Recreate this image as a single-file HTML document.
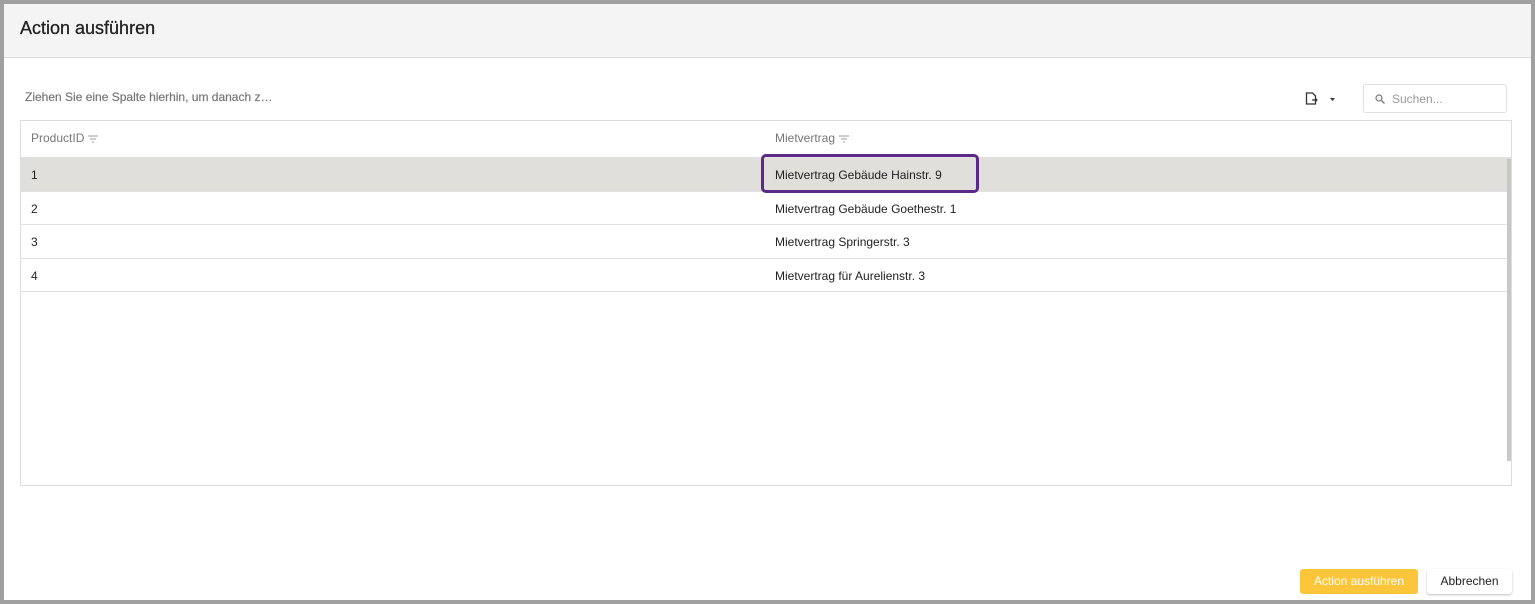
<!DOCTYPE html>
<html><head><meta charset="utf-8"><style>
*{box-sizing:border-box;margin:0;padding:0}
body{width:1535px;height:604px;background:#a0a0a0;font-family:"Liberation Sans",Roboto,sans-serif;position:relative;overflow:hidden}
.win{position:absolute;left:4px;top:4px;width:1527px;height:596px;background:#fff}
.hdr{position:absolute;left:0;top:0;width:100%;height:54px;background:#f4f4f4;border-bottom:1px solid #dcdcdc}
.hdr span{position:absolute;left:16px;top:14px;font-size:18px;color:#222;-webkit-text-stroke:0.3px #222}
.grp{position:absolute;left:21px;top:86px;font-size:12px;color:#777;-webkit-text-stroke:0.2px #777}
.search{position:absolute;left:1359px;top:80px;width:144px;height:29px;border:1px solid #e0e0e0;border-radius:3px;font-size:12px;color:#999;padding:7px 0 0 28px}
.tbl{position:absolute;left:16px;top:116px;width:1492px;height:366px;border:1px solid #ddd}
.row{position:absolute;left:0;width:1490px;font-size:12px;color:#222;border-bottom:1px solid #e2e2e2}
.row span{position:absolute;top:10px}
.c1{left:10px}.c2{left:754px}
.th{color:#777}
.fi{display:inline-block;vertical-align:middle;margin-left:3px}
.box{position:absolute;left:757px;top:150px;width:218px;height:39px;border:3px solid #5b2a86;border-radius:5px}
.btn{position:absolute;top:565px;height:25px;font-size:12px;text-align:center;line-height:25px;border-radius:3px}
</style></head><body>
<div class="win">
<div class="hdr"><span>Action ausführen</span></div>
<div class="grp">Ziehen Sie eine Spalte hierhin, um danach z…</div>
<svg style="position:absolute;left:1301px;top:88px" width="36" height="14" viewBox="0 0 36 14"><path d="M1.5 1h6l3 3v8h-9z" fill="none" stroke="#333" stroke-width="1.3"/><path d="M7 8h5M10 6l2 2-2 2" fill="none" stroke="#333" stroke-width="1.2"/><path d="M25 6h5l-2.5 3z" fill="#333"/></svg>
<div class="search"><svg style="position:absolute;left:11px;top:9px" width="10" height="10"><circle cx="4" cy="4" r="3" fill="none" stroke="#777" stroke-width="1.2"/><path d="M6.5 6.5L9.5 9.5" stroke="#777" stroke-width="1.3"/></svg>Suchen...</div>
<div class="tbl">
<div class="row th" style="top:0;height:37px"><span class="c1">ProductID<svg class="fi" width="12" height="10"><path d="M1 2h10M3 5h6M5 8h2" stroke="#999" stroke-width="1"/></svg></span><span class="c2">Mietvertrag<svg class="fi" width="12" height="10"><path d="M1 2h10M3 5h6M5 8h2" stroke="#999" stroke-width="1"/></svg></span></div>
<div class="row" style="top:37px;height:34px;background:#e0dfdb"><span class="c1">1</span><span class="c2">Mietvertrag Gebäude Hainstr. 9</span></div>
<div class="row" style="top:71px;height:33px"><span class="c1">2</span><span class="c2">Mietvertrag Gebäude Goethestr. 1</span></div>
<div class="row" style="top:104px;height:34px"><span class="c1">3</span><span class="c2">Mietvertrag Springerstr. 3</span></div>
<div class="row" style="top:138px;height:33px"><span class="c1">4</span><span class="c2">Mietvertrag für Aurelienstr. 3</span></div>
<div style="position:absolute;left:1486px;top:38px;width:4px;height:302px;background:#c8c8c8"></div>
</div>
<div class="box"></div>
<div class="btn" style="left:1296px;width:118px;background:#fdc63a;color:#fff">Action ausführen</div>
<div class="btn" style="left:1423px;width:85px;background:#fff;color:#222;box-shadow:0 1px 2px rgba(0,0,0,.25)">Abbrechen</div>
</div>
</body></html>
